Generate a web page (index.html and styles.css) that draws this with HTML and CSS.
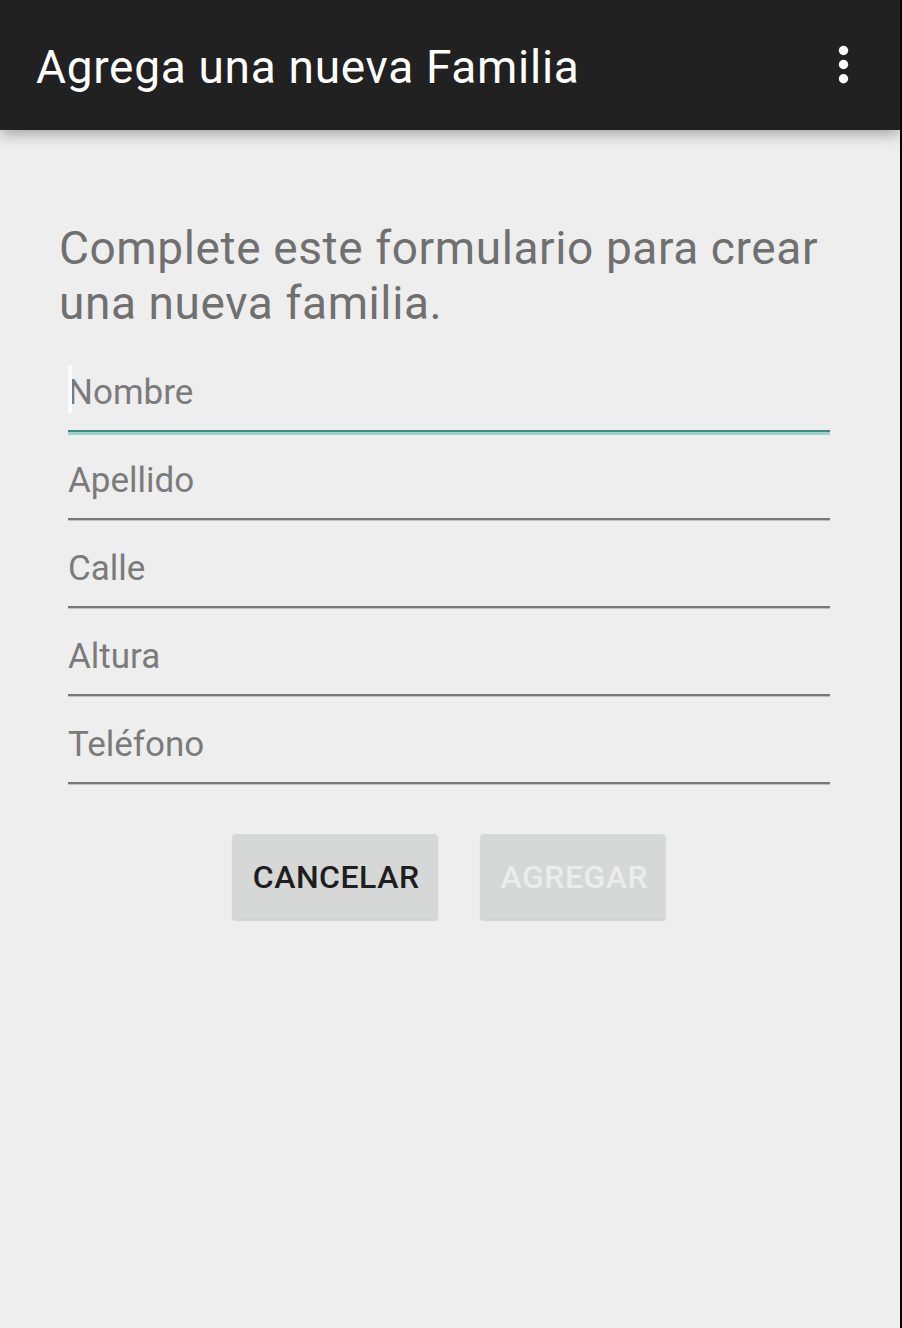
FILE: index.html
```html
<!DOCTYPE html>
<html lang="es">
<head>
<meta charset="utf-8">
<title>Agrega una nueva Familia</title>
<link rel="stylesheet" href="styles.css">
</head>
<body>
<div class="screen">
  <header class="appbar">
    <h1 class="appbar-title">Agrega una nueva Familia</h1>
    <button class="overflow" aria-label="Más opciones">
      <svg width="12" height="40" viewBox="0 0 12 40">
        <circle cx="5.5" cy="5.5" r="4.7" fill="#fff"/>
        <circle cx="5.5" cy="19.5" r="4.7" fill="#fff"/>
        <circle cx="5.5" cy="33.7" r="4.7" fill="#fff"/>
      </svg>
    </button>
  </header>
  <main class="content">
    <p class="intro">Complete este formulario para crear una nueva familia.</p>
    <form class="form">
      <div class="field focused"><span class="caret"></span><span class="hint">Nombre</span></div>
      <div class="field"><span class="hint">Apellido</span></div>
      <div class="field"><span class="hint">Calle</span></div>
      <div class="field"><span class="hint">Altura</span></div>
      <div class="field"><span class="hint">Teléfono</span></div>
      <div class="actions">
        <button type="button" class="btn">CANCELAR</button>
        <button type="button" class="btn disabled">AGREGAR</button>
      </div>
    </form>
  </main>
</div>
</body>
</html>
```

FILE: styles.css
```css
html, body {
  margin: 0;
  padding: 0;
  background: #000;
}
body {
  font-family: Roboto, "Liberation Sans", sans-serif;
  width: 902px;
  height: 1328px;
  overflow: hidden;
}
.screen {
  width: 900px;
  height: 1328px;
  background: #eeeeee;
  overflow: hidden;
}
.appbar {
  position: relative;
  z-index: 1;
  height: 130px;
  box-sizing: border-box;
  background: #212121;
  display: flex;
  align-items: flex-start;
  justify-content: space-between;
  box-shadow: 0 4px 14px rgba(0, 0, 0, 0.32);
}
.appbar-title {
  margin: 40px 0 0 36px;
  font-size: 46px;
  line-height: 54px;
  font-weight: 400;
  letter-spacing: 0.7px;
  color: #ffffff;
}
.overflow {
  margin: 45px 50px 0 0;
  padding: 0;
  border: 0;
  background: none;
  width: 12px;
  height: 40px;
  display: block;
}
.overflow svg { display: block; }
.content {
  padding: 91px 0 0 59px;
}
.intro {
  margin: 0;
  width: 800px;
  font-size: 46px;
  line-height: 55px;
  letter-spacing: 0.6px;
  color: #707070;
}
.form {
  margin: 13px 0 0 9px;
  width: 762px;
}
.field {
  position: relative;
  height: 88px;
  box-sizing: border-box;
  padding: 0 0 17px 0;
  display: flex;
  align-items: flex-end;
  border-bottom: 2px solid #777777;
  box-shadow: 0 1px 0 #c2c2c2;
}
.field.focused {
  border-bottom-color: #3d8b80;
  box-shadow: 0 3px 0 #9fd1cb;
}
.hint {
  font-size: 35px;
  line-height: 40px;
  color: #7b7b7b;
}
.caret {
  position: absolute;
  left: 0;
  bottom: 17px;
  width: 4px;
  height: 48px;
  background: #fafafa;
}
.actions {
  margin: 50px 0 0 0;
  display: flex;
  justify-content: center;
  gap: 42px;
}
.btn {
  height: 85px;
  padding: 0 18px 0 21px;
  border: 0;
  border-radius: 4px;
  background: #d6d7d7;
  box-shadow: 0 2px 1px rgba(0, 0, 0, 0.12);
  font-family: Roboto, "Liberation Sans", sans-serif;
  font-weight: 500;
  font-size: 32px;
  letter-spacing: 0.5px;
  color: #1e1e1e;
}
.btn.disabled {
  color: #ececec;
}
```
